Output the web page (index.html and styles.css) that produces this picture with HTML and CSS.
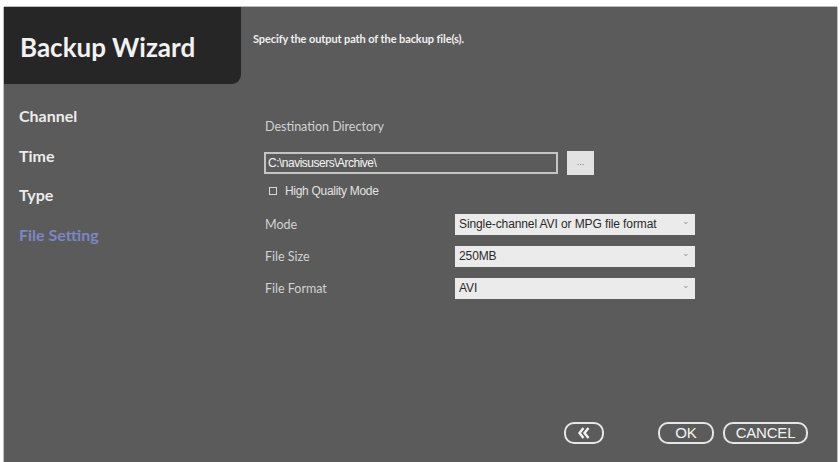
FILE: index.html
```html
<!DOCTYPE html>
<html>
<head>
<meta charset="utf-8">
<link rel="stylesheet" href="styles.css">
</head>
<body>
<div class="frame">
  <aside class="side">
    <div class="brand">Backup Wizard</div>
    <ul class="steps">
      <li>Channel</li>
      <li>Time</li>
      <li>Type</li>
      <li class="active">File Setting</li>
    </ul>
  </aside>
  <main class="main">
    <p class="desc">Specify the output path of the backup file(s).</p>
    <div class="form">
      <div class="label dest">Destination Directory</div>
      <div class="pathrow">
        <div class="path">C:\navisusers\Archive\</div>
        <div class="browse">...</div>
      </div>
      <div class="check"><span class="box"></span>High Quality Mode</div>
      <div class="row first">
        <span class="label">Mode</span>
        <div class="select">Single-channel AVI or MPG file format<span class="arrow">⌄</span></div>
      </div>
      <div class="row">
        <span class="label">File Size</span>
        <div class="select">250MB<span class="arrow">⌄</span></div>
      </div>
      <div class="row">
        <span class="label">File Format</span>
        <div class="select">AVI<span class="arrow">⌄</span></div>
      </div>
    </div>
    <div class="actions">
      <div class="btn back"><svg width="14" height="12" viewBox="0 0 14 12"><path d="M6.5 1 L2.5 6 L6.5 11 M11.5 1 L7.5 6 L11.5 11" fill="none" stroke="#f4f4f4" stroke-width="2.4" stroke-linejoin="miter"/></svg></div>
      <div class="btn ok">OK</div>
      <div class="btn cancel">CANCEL</div>
    </div>
  </main>
</div>
</body>
</html>
```
FILE: styles.css
```css
html, body {
  margin: 0;
  padding: 0;
  background: #ffffff;
}
body {
  width: 840px;
  height: 462px;
  overflow: hidden;
}
.frame {
  margin: 7px 0 0 4px;
  width: 833px;
  height: 455px;
  background: #5b5b5b;
  display: flex;
  box-shadow: -1px 0 0 #bdbdbd, 1px 0 0 #bdbdbd, 0 -1px 0 #bdbdbd;
}
.side {
  width: 237px;
  flex: none;
  display: flex;
  flex-direction: column;
}
.brand {
  height: 77px;
  background: #262626;
  border-bottom-right-radius: 9px;
  color: #f2f2f2;
  font-family: Lato, sans-serif;
  font-weight: 700;
  font-size: 26px;
  padding-left: 16px;
  line-height: 80px;
}
.steps {
  list-style: none;
  margin: 0;
  padding: 0 0 0 15px;
  font-family: Lato, sans-serif;
  font-weight: 700;
  font-size: 16px;
  color: #ececec;
}
.steps li {
  height: 39.6px;
  line-height: 20px;
}
.steps li:first-child {
  margin-top: 22px;
}
.steps li.active {
  color: #7c86c2;
}
.main {
  flex: 1;
  display: flex;
  flex-direction: column;
  padding-left: 12px;
  padding-right: 29px;
}
.desc {
  margin: 25px 0 0 0;
  font-family: Lato, sans-serif;
  font-weight: 700;
  font-size: 11px;
  letter-spacing: -0.1px;
  color: #f0f0f0;
}
.form {
  width: 431px;
  margin-left: 11px;
  font-family: "Liberation Sans", Arial, sans-serif;
  font-size: 12px;
  color: #e4e4e4;
  margin-top: 74px;
}
.label {
  font-family: Lato, sans-serif;
  font-size: 12.5px;
  color: #d2d2d2;
  padding-left: 1px;
}
.dest {
  height: 18px;
}
.pathrow {
  display: flex;
  align-items: center;
  gap: 9px;
  margin-top: 14px;
}
.path {
  width: 288px;
  height: 18px;
  border: 2px solid #c4c4c4;
  line-height: 18px;
  padding-left: 2px;
  color: #f4f4f4;
  letter-spacing: -0.5px;
}
.browse {
  width: 27px;
  height: 24px;
  background: #e2e2e2;
  color: #777;
  text-align: center;
  font-size: 9px;
  line-height: 22px;
}
.check {
  display: flex;
  align-items: center;
  gap: 8px;
  margin: 9px 0 0 5px;
  height: 14px;
  color: #e2e2e2;
  letter-spacing: -0.3px;
}
.box {
  width: 6px;
  height: 6px;
  border: 1px solid #d8d8d8;
}
.row {
  display: flex;
  align-items: center;
  justify-content: space-between;
  height: 21px;
  margin-top: 11px;
}
.row.first { margin-top: 16px; }
.select {
  width: 240px;
  height: 21px;
  background: #ebebeb;
  color: #2a2a2a;
  line-height: 21px;
  padding-left: 4px;
  position: relative;
  box-sizing: border-box;
  letter-spacing: -0.1px;
}
.arrow {
  position: absolute;
  right: 5px;
  top: -3px;
  color: #999;
  font-size: 9px;
}
.actions {
  margin-top: auto;
  margin-bottom: 18px;
  display: flex;
  align-items: center;
  padding-left: 311px;
  font-family: "Liberation Sans", Arial, sans-serif;
  font-size: 15px;
  color: #f4f4f4;
}
.btn {
  height: 18px;
  border: 2px solid #e6e6e6;
  border-radius: 10px;
  line-height: 18px;
  text-align: center;
  display: flex;
  align-items: center;
  justify-content: center;
}
.back {
  width: 36px;
}
.ok {
  width: 52px;
  margin-left: 54px;
}
.cancel {
  width: 81px;
  margin-left: 9px;
  letter-spacing: -0.2px;
}
```
